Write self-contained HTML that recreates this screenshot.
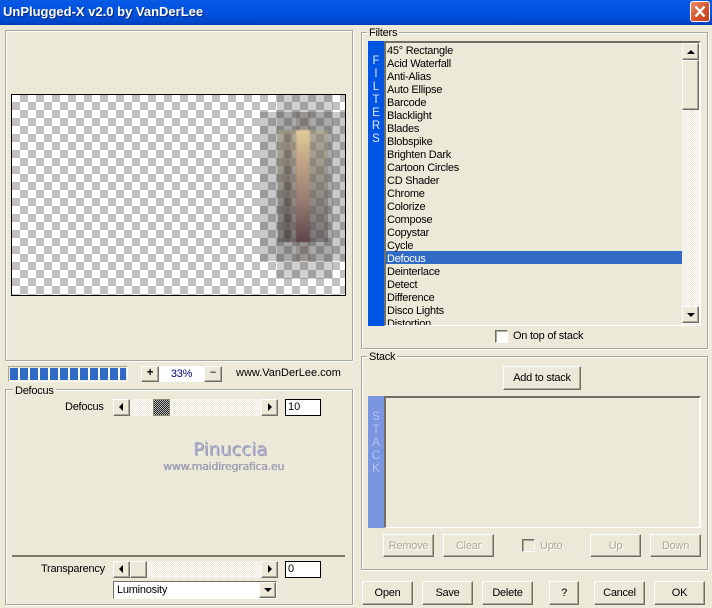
<!DOCTYPE html>
<html><head><meta charset="utf-8">
<style>
html,body{margin:0;padding:0;}
body{width:712px;height:608px;overflow:hidden;position:relative;background:#ece9d8;font:11px "Liberation Sans",sans-serif;letter-spacing:-.25px;color:#000;}
.a{position:absolute;}
.t{position:absolute;white-space:nowrap;line-height:13px;}
.g{position:absolute;border:1px solid #aca899;box-shadow:inset 1px 1px 0 #fff,1px 1px 0 #fff;box-sizing:border-box;}
.b{position:absolute;box-sizing:border-box;background:#ece9d8;border:1px solid;border-color:#fff #716f64 #716f64 #fff;box-shadow:inset -1px -1px 0 #aca899;text-align:center;line-height:23px;white-space:nowrap;}
.d{color:#aca899;text-shadow:1px 1px 0 #fff;}
.ar{position:absolute;width:0;height:0;border-style:solid;border-color:transparent;}
.tr{position:absolute;background-color:#f4f2ea;background-image:repeating-conic-gradient(#ece9d8 0 25%,#fff 0 50%);background-size:2px 2px;}
.sk{position:absolute;box-sizing:border-box;border:1px solid;border-color:#716f64 #fff #fff #716f64;box-shadow:inset 1px 1px 0 #aca899;}
.lg{position:absolute;background:#ece9d8;padding:0 2px;line-height:13px;}
</style></head><body>

<div class="a" style="left:0;top:0;width:712px;height:25px;background:linear-gradient(#0a5ce0 0,#0457e4 10%,#0153e0 50%,#0048cc 85%,#0040b8 100%);"></div>
<div class="t" style="left:3px;top:4px;color:#fff;font-weight:bold;font-size:13px;letter-spacing:0;line-height:16px;text-shadow:1px 1px 0 #0a2a80;">UnPlugged-X v2.0 by VanDerLee</div>
<div class="a" style="left:690px;top:1px;width:20px;height:21px;box-sizing:border-box;border:1px solid #fff;border-radius:3px;background:linear-gradient(135deg,#e8906c,#d6532c 55%,#c23d1c);">
<svg width="18" height="19" style="position:absolute;left:0;top:0"><path d="M4.5 4.5L13.5 14.5M13.5 4.5L4.5 14.5" stroke="#fff" stroke-width="2.4" fill="none"/></svg></div>

<div class="g" style="left:5px;top:30px;width:348px;height:331px;"></div>
<div class="a" style="left:11px;top:94px;width:335px;height:202px;box-sizing:border-box;border:1px solid #000;background:#fff;overflow:hidden;">
  <div class="a" style="left:0;top:-1px;width:340px;height:210px;background-image:repeating-conic-gradient(#c0c0c0 0 25%,#fff 0 50%);background-size:16px 16px;"></div>
  <div class="a" style="left:265px;top:0;width:56px;height:184px;background:rgba(70,70,70,.25);"></div>
  <div class="a" style="left:248px;top:17px;width:85px;height:149px;background:rgba(60,60,60,.28);"></div>
  <div class="a" style="left:266px;top:35px;width:50px;height:112px;background:linear-gradient(rgba(185,170,130,.4),rgba(80,70,72,.5));"></div>
  <div class="a" style="left:272px;top:35px;width:7px;height:112px;filter:blur(1px);background:linear-gradient(rgba(90,75,60,.3),rgba(50,40,40,.4));"></div>
  <div class="a" style="left:284px;top:17px;width:14px;height:149px;background:rgba(100,85,70,.25);"></div>
  <div class="a" style="left:284px;top:35px;width:14px;height:112px;filter:blur(.8px);background:linear-gradient(#e0cc98,#c4a888 25%,#9a8074 60%,#5e454a);"></div>
</div>

<div class="a" style="left:8px;top:366px;width:120px;height:16px;box-sizing:border-box;border:1px solid;border-color:#aca899 #fff #fff #aca899;background-color:#fff;background-image:repeating-linear-gradient(90deg,#316ac5 0 8px,#fff 8px 10px);background-origin:content-box;background-clip:content-box;padding:1px;"></div>
<div class="b" style="left:141px;top:366px;width:18px;height:16px;line-height:13px;font-weight:bold;font-size:11.5px;">+</div>
<div class="a" style="left:159px;top:366px;width:45px;height:16px;background:#fff;text-align:center;color:#000080;line-height:16px;">33%</div>
<div class="b" style="left:204px;top:366px;width:18px;height:16px;line-height:13px;font-size:11.5px;">−</div>
<div class="t" style="left:236px;top:367px;font-size:11px;letter-spacing:0;">www.VanDerLee.com</div>

<div class="g" style="left:5px;top:389px;width:348px;height:216px;"></div>
<div class="lg" style="left:13px;top:385px;">Defocus</div>
<div class="t" style="left:65px;top:401px;">Defocus</div>
<div class="tr" style="left:113px;top:399px;width:165px;height:17px;"></div>
<div class="b" style="left:113px;top:399px;width:17px;height:17px;"><div class="ar" style="left:5px;top:3px;border-width:4px 4px 4px 0;border-right-color:#000;"></div></div>
<div class="a" style="left:153px;top:399px;width:17px;height:17px;box-sizing:border-box;border:1px solid #8a8878;background-color:#444;background-image:repeating-conic-gradient(#222 0 25%,#bbb 0 50%);background-size:2px 2px;"></div>
<div class="b" style="left:261px;top:399px;width:17px;height:17px;"><div class="ar" style="left:6px;top:3px;border-width:4px 0 4px 4px;border-left-color:#000;"></div></div>
<div class="a" style="left:285px;top:399px;width:36px;height:17px;box-sizing:border-box;background:#fff;border:1px solid #000;padding-left:2px;line-height:15px;font-size:11px;letter-spacing:0;">10</div>

<div class="t" style="left:193px;top:440px;font:18px/20px 'DejaVu Sans',sans-serif;letter-spacing:0;color:#aeb0cc;text-shadow:1px 1px 0 #9496b0;">Pinuccia</div>
<div class="t" style="left:163px;top:460px;font:11px/13px 'DejaVu Sans',sans-serif;color:#9c9cb0;letter-spacing:-.25px;text-shadow:.5px 0 0 #a8a8bc;">www.maidiregrafica.eu</div>

<div class="a" style="left:12px;top:555px;width:333px;height:2px;background:#7f7b66;"></div>
<div class="t" style="left:41px;top:563px;">Transparency</div>
<div class="tr" style="left:113px;top:561px;width:165px;height:17px;"></div>
<div class="b" style="left:113px;top:561px;width:17px;height:17px;"><div class="ar" style="left:5px;top:3px;border-width:4px 4px 4px 0;border-right-color:#000;"></div></div>
<div class="b" style="left:130px;top:561px;width:17px;height:17px;"></div>
<div class="b" style="left:261px;top:561px;width:17px;height:17px;"><div class="ar" style="left:6px;top:3px;border-width:4px 0 4px 4px;border-left-color:#000;"></div></div>
<div class="a" style="left:285px;top:561px;width:36px;height:17px;box-sizing:border-box;background:#fff;border:1px solid #000;padding-left:2px;line-height:15px;font-size:11px;">0</div>
<div class="a" style="left:113px;top:581px;width:164px;height:18px;box-sizing:border-box;background:#fff;border:1px solid;border-color:#716f64 #fff #fff #716f64;padding-left:3px;line-height:17px;">Luminosity</div>
<div class="b" style="left:259px;top:582px;width:17px;height:16px;"><div class="ar" style="left:4px;top:5px;border-width:4px 4px 0 4px;border-top-color:#000;"></div></div>

<div class="g" style="left:361px;top:32px;width:347px;height:317px;"></div>
<div class="lg" style="left:367px;top:27px;">Filters</div>
<div class="a" style="left:368px;top:41px;width:16px;height:285px;background:#0054e3;"></div>
<div class="t" style="left:368px;width:16px;top:55px;text-align:center;color:#dfe8ff;line-height:13px;white-space:normal;font-size:11.5px;letter-spacing:0;">F<br>I<br>L<br>T<br>E<br>R<br>S</div>
<div class="a" style="left:384px;top:41px;width:317px;height:285px;box-sizing:border-box;border:2px solid;border-color:#716f64 #fff #fff #716f64;border-bottom-width:1px;overflow:hidden;">
  <div class="a" style="left:-1px;top:208px;width:297px;height:13px;background:#316ac5;"></div>
  <div class="t" style="left:1px;top:2px;line-height:13px;">45° Rectangle<br>Acid Waterfall<br>Anti-Alias<br>Auto Ellipse<br>Barcode<br>Blacklight<br>Blades<br>Blobspike<br>Brighten Dark<br>Cartoon Circles<br>CD Shader<br>Chrome<br>Colorize<br>Compose<br>Copystar<br>Cycle<br><span style="color:#fff">Defocus</span><br>Deinterlace<br>Detect<br>Difference<br>Disco Lights<br>Distortion</div>
  <div class="tr" style="left:296px;top:0;width:18px;height:282px;"></div>
  <div class="b" style="left:296px;top:0;width:17px;height:17px;"><div class="ar" style="left:4px;top:6px;border-width:0 4px 4px 4px;border-bottom-color:#000;"></div></div>
  <div class="b" style="left:296px;top:17px;width:17px;height:50px;"></div>
  <div class="b" style="left:296px;top:263px;width:17px;height:17px;"><div class="ar" style="left:4px;top:6px;border-width:4px 4px 0 4px;border-top-color:#000;"></div></div>
</div>
<div class="sk" style="left:495px;top:330px;width:13px;height:13px;background:#fff;"></div>
<div class="t" style="left:513px;top:330px;">On top of stack</div>

<div class="g" style="left:361px;top:356px;width:347px;height:214px;"></div>
<div class="lg" style="left:367px;top:351px;">Stack</div>
<div class="b" style="left:503px;top:366px;width:78px;height:24px;">Add to stack</div>
<div class="a" style="left:368px;top:396px;width:16px;height:132px;background:#7b96e0;"></div>
<div class="t" style="left:368px;width:16px;top:411px;text-align:center;color:#b4c4f0;line-height:13px;white-space:normal;font-size:11.5px;letter-spacing:0;">S<br>T<br>A<br>C<br>K</div>
<div class="a" style="left:384px;top:396px;width:317px;height:132px;box-sizing:border-box;border:2px solid;border-color:#716f64 #fff #fff #716f64;border-bottom-width:1px;"></div>

<div class="b d" style="left:383px;top:534px;width:51px;height:23px;">Remove</div>
<div class="b d" style="left:443px;top:534px;width:51px;height:23px;">Clear</div>
<div class="sk" style="left:522px;top:539px;width:13px;height:13px;"></div>
<div class="t d" style="left:540px;top:540px;">Upto</div>
<div class="b d" style="left:590px;top:534px;width:51px;height:23px;">Up</div>
<div class="b d" style="left:650px;top:534px;width:51px;height:23px;">Down</div>

<div class="b" style="left:362px;top:581px;width:51px;height:24px;">Open</div>
<div class="b" style="left:422px;top:581px;width:51px;height:24px;">Save</div>
<div class="b" style="left:482px;top:581px;width:51px;height:24px;">Delete</div>
<div class="b" style="left:549px;top:581px;width:30px;height:24px;">?</div>
<div class="b" style="left:594px;top:581px;width:51px;height:24px;">Cancel</div>
<div class="b" style="left:654px;top:581px;width:51px;height:24px;">OK</div>
</body></html>
